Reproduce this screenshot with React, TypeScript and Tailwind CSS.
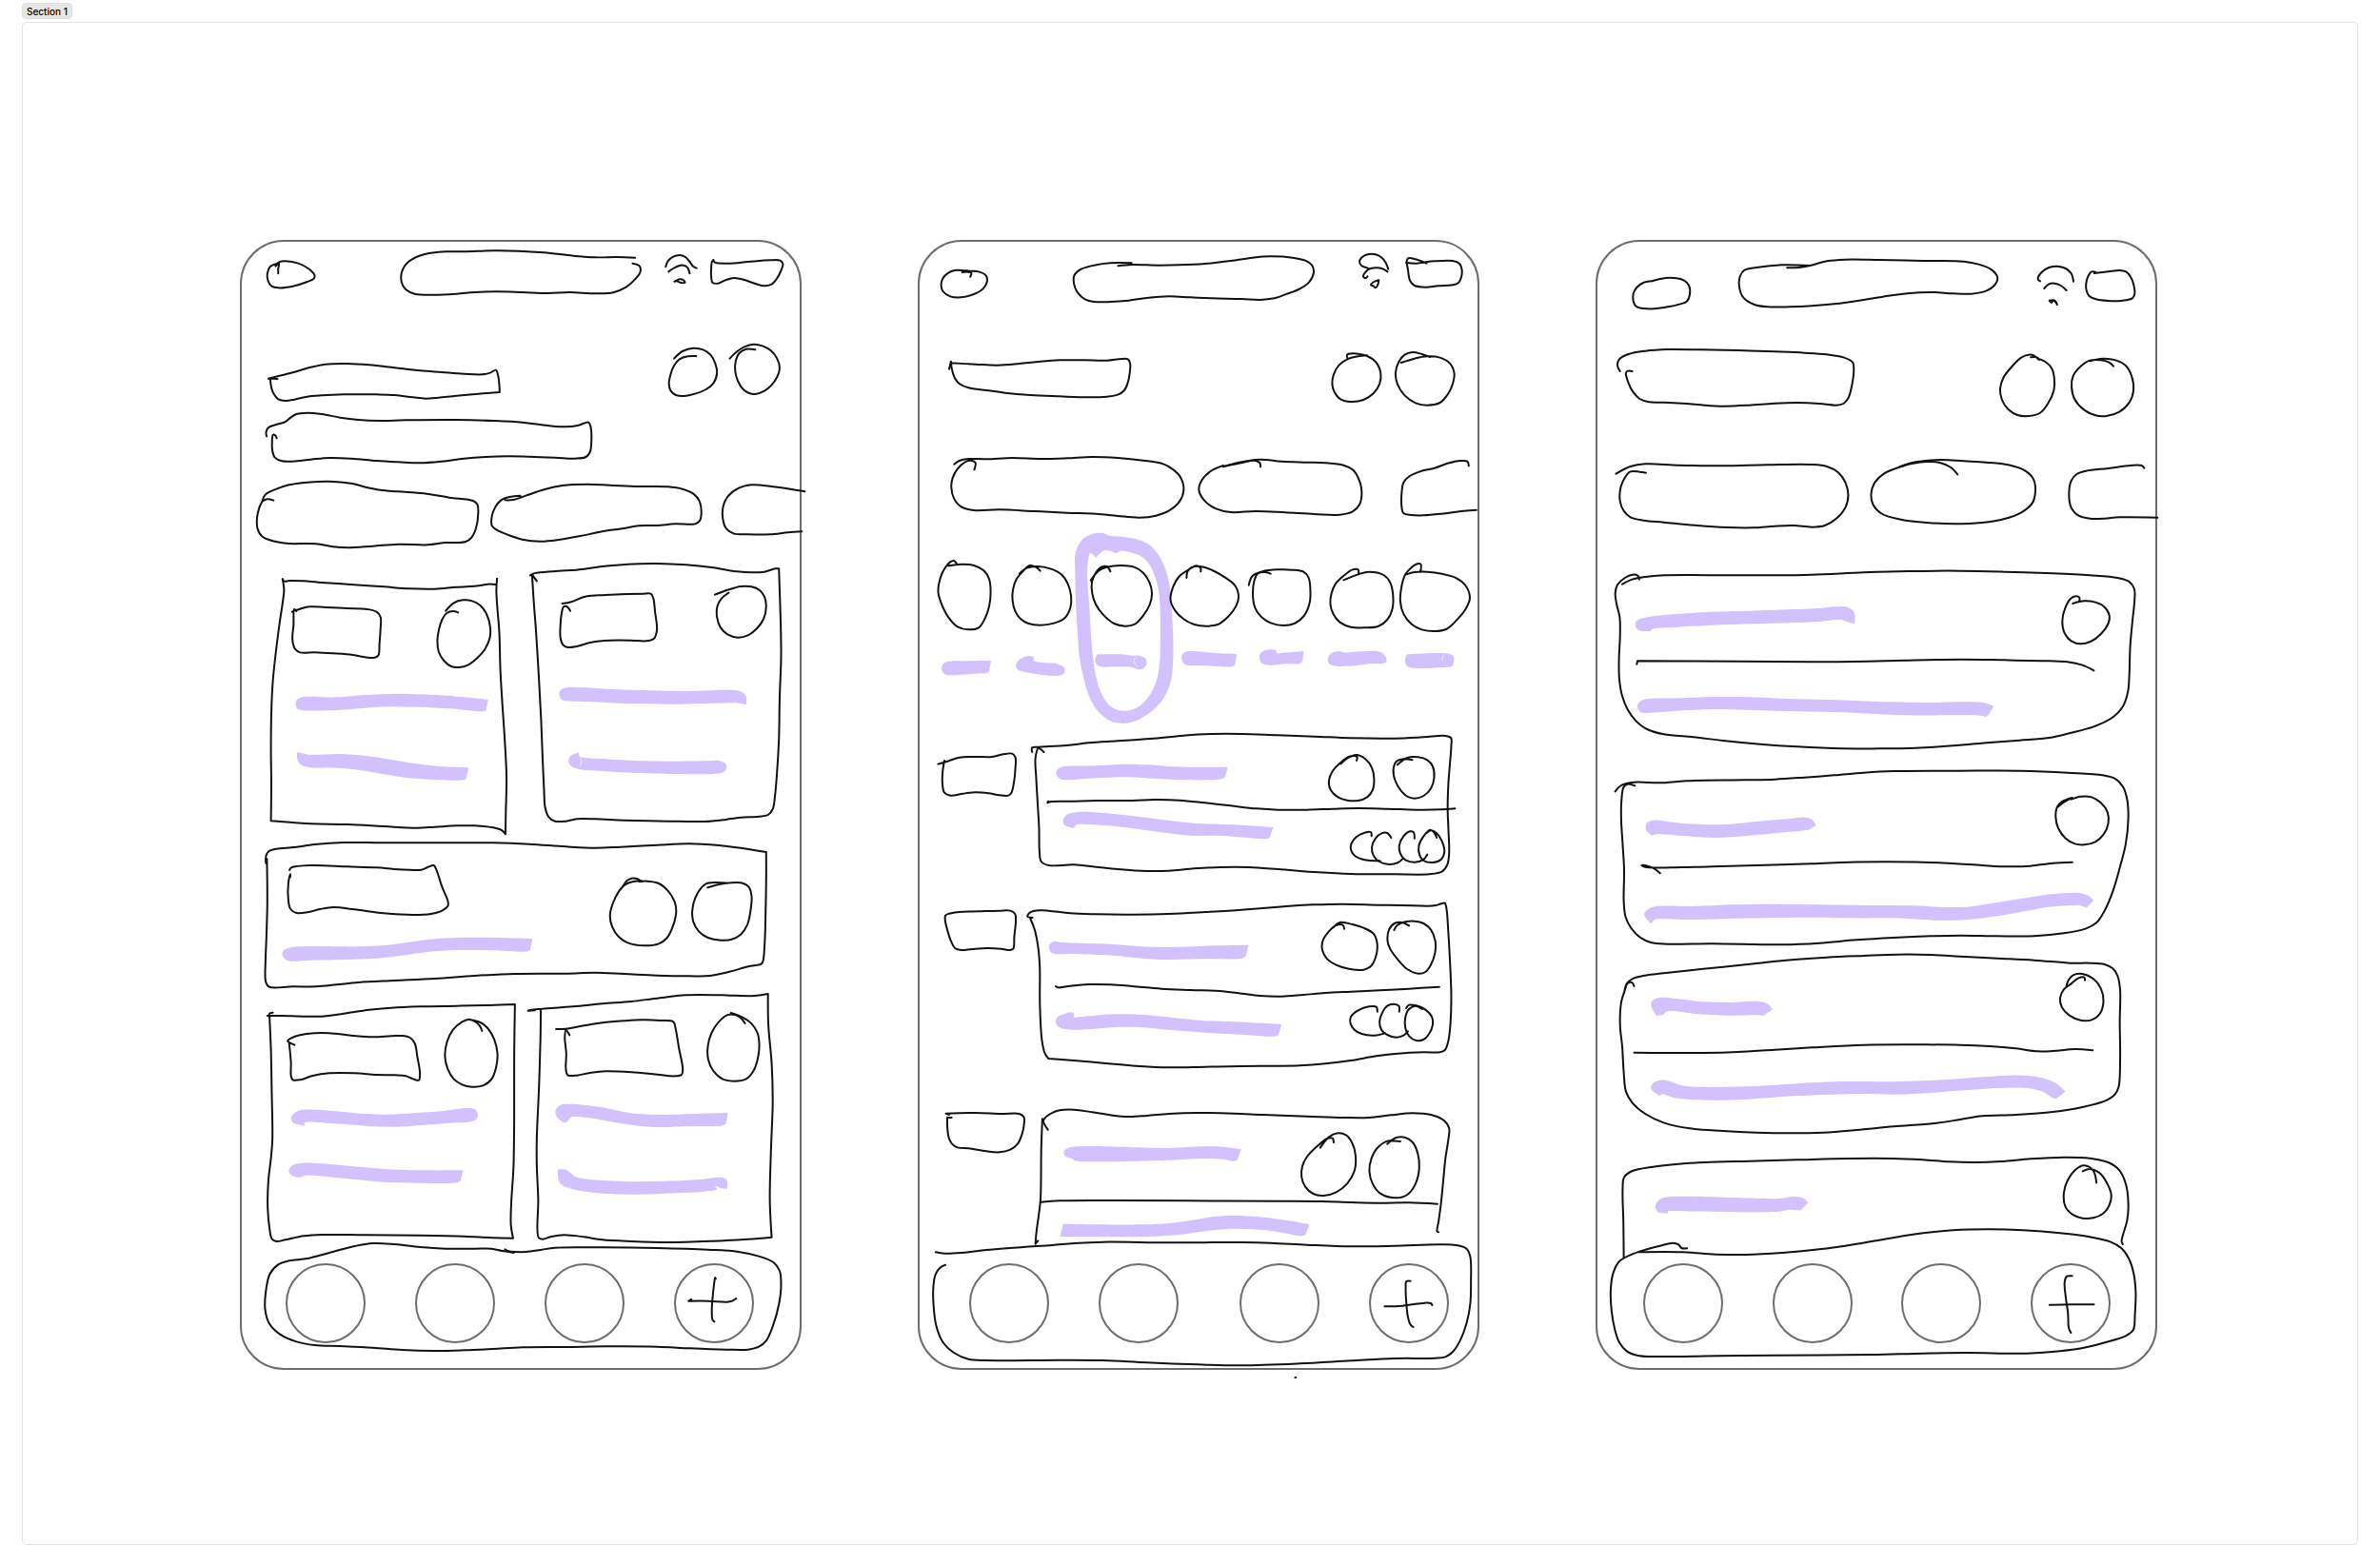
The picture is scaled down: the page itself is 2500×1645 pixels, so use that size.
import React from "react";

type Point = [number, number];

/** Reads "x,y x,y | x,y": a bar makes the point before it a sharp corner. */
function parse(stroke: string): Point[][] {
  const runs = stroke.split("|").map((run) =>
    run
      .trim()
      .split(/\s+/)
      .filter(Boolean)
      .map((pair) => pair.split(",").map(Number) as Point),
  );
  const filled = runs.filter((run) => run.length > 0);
  return filled.map((run, i) => {
    if (i === 0) return run;
    const before = filled[i - 1];
    return [before[before.length - 1], ...run];
  });
}

const dist = (a: Point, b: Point) => Math.sqrt(Math.hypot(a[0] - b[0], a[1] - b[1]));

/** Centripetal Catmull-Rom spline through the points of one run. */
function spline(run: Point[]): string {
  let d = "";
  for (let i = 0; i < run.length - 1; i++) {
    const p0 = run[i - 1] ?? run[i];
    const p1 = run[i];
    const p2 = run[i + 1];
    const p3 = run[i + 2] ?? p2;
    const a = dist(p0, p1);
    const b = dist(p1, p2);
    const c = dist(p2, p3);
    const control = (k: 0 | 1, side: "out" | "in") => {
      if (side === "out") {
        if (a < 0.01) return p1[k];
        return (a * a * p2[k] - b * b * p0[k] + (2 * a * a + 3 * a * b + b * b) * p1[k]) / (3 * a * (a + b));
      }
      if (c < 0.01) return p2[k];
      return (c * c * p1[k] - b * b * p3[k] + (2 * c * c + 3 * c * b + b * b) * p2[k]) / (3 * c * (c + b));
    };
    const n = (v: number) => v.toFixed(1);
    d += `C${n(control(0, "out"))} ${n(control(1, "out"))} ${n(control(0, "in"))} ${n(control(1, "in"))} ${p2[0]} ${p2[1]}`;
  }
  return d;
}

function toPath(stroke: string): string {
  const runs = parse(stroke);
  return `M${runs[0][0].join(" ")}` + runs.map(spline).join("");
}

interface InkProps {
  box: string;
  pen?: string[];
  marker?: string[];
  gaps?: string[];
}

/** Freehand drawing: thin black pen strokes over flat highlighter shapes. */
function Ink({ box, pen = [], marker = [], gaps = [] }: InkProps) {
  return (
    <svg viewBox={box} preserveAspectRatio="none" aria-hidden="true" className="block size-full overflow-visible">
      {marker.map((shape) => (
        <path
          key={shape}
          d={shape
            .split("&")
            .map((part) => toPath(part) + "Z")
            .join("")}
          fillRule="evenodd"
          className="fill-[#d3c1fe]"
        />
      ))}
      {gaps.map((stroke) => (
        <path key={stroke} d={toPath(stroke)} vectorEffect="non-scaling-stroke" className="fill-none stroke-[#f3edff] stroke-1" />
      ))}
      {pen.map((stroke) => (
        <path
          key={stroke}
          d={toPath(stroke)}
          vectorEffect="non-scaling-stroke"
          strokeLinecap="round"
          strokeLinejoin="round"
          className="fill-none stroke-[#111111] stroke-2"
        />
      ))}
    </svg>
  );
}

function Phone({ label, children }: { label: string; children: React.ReactNode }) {
  return (
    <article aria-label={label} className="flex flex-col rounded-[46px] border-2 border-[#6e6e6e]">
      {children}
    </article>
  );
}

function NavButton({ label, children }: { label: string; children?: React.ReactNode }) {
  return (
    <button type="button" aria-label={label} className="size-[84px] shrink-0 rounded-full border-2 border-[#6e6e6e]">
      {children}
    </button>
  );
}

/** The plus drawing fills the button's border box. */
function Plus({ box, pen }: { box: string; pen: string[] }) {
  return (
    <span className="-m-0.5 block size-[84px]">
      <Ink box={box} pen={pen} />
    </span>
  );
}

function Dashboard() {
  return (
    <Phone label="Dashboard">
      <header className="h-[86px]">
        <Ink
          box="10 42 1532 258"
          pen={[
            "110,142 110,128 112,110 103,118",
            "103,112 88,120 80,142 82,165 92,182 110,187 150,182 190,168 208,158 210,148 195,128 165,110 130,103 112,106 103,118",
            "1090,92 1040,90 980,91 920,86 840,76 770,71 700,70 620,73 570,73 510,82 470,103 450,135 449,170 460,192 485,206 540,209 600,206 650,201 710,199 780,201 850,204 910,201 980,205 1030,202 1065,185 1090,160 1104,138 1102,118 1083,110",
            "1174,121 1180,103 1195,89 1212,84 1228,90 1240,105 1250,120 1259,125",
            "1182,136 1195,126 1210,118 1222,116 1233,122 1240,142",
            "1198,167 1205,163 1213,160 1222,162 1227,170 1213,170 1205,166 1198,167",
            "1305,99 1309,107 1350,110 1400,105 1460,100 1488,101 1496,112 1490,135 1478,160 1465,176 1445,181 1420,174 1390,162 1362,156 1340,162 1318,173 1303,171 1299,150 1299,125 1301,105 1305,99",
          ]}
        />
      </header>
      <section aria-label="Greeting" className="h-[156px]">
        <Ink
          box="10 300 1532 468"
          pen={[
            "108,474 96,473 83,473 | 110,465 150,454 190,440 240,428 300,426 360,430 430,439 500,448 560,453 620,458 670,460 692,455 708,446 713,460 717,490 718,516 | 660,521 600,527 550,533 515,536 480,532 430,525 380,523 290,523 230,526 190,530 155,539 130,543 110,538 97,520 91,500 88,474",
            "78,655 77,640 85,626 105,618 130,609 145,595 160,585 190,581 230,585 280,596 330,603 390,606 460,604 600,603 700,606 780,611 850,621 900,625 935,620 962,611 968,625 970,670 966,705 955,720 925,725 870,722 800,719 740,718 680,720 620,725 560,734 500,739 440,736 380,732 310,725 250,723 200,728 150,734 120,733 101,722 94,700 93,675 96,650 102,652 106,661",
            "1258,402 1235,403 1212,412 1197,432 1187,462 1183,490 1188,512 1202,525 1225,528 1255,521 1285,507 1305,488 1315,455 1310,425 1297,398 1277,382 1250,377 1220,387 1197,410",
            "1420,382 1395,380 1376,393 1366,420 1365,450 1372,480 1387,507 1403,519 1420,522 1445,512 1465,493 1480,468 1487,440 1480,410 1463,385 1440,370 1415,365 1390,373 1370,388 1350,410",
          ]}
        />
      </section>
      <section aria-label="Filters" className="h-[94px]">
        <Ink
          box="10 768 1532 282"
          pen={[
            "97,857 80,853 66,860 | 75,838 100,823 140,808 190,800 250,797 310,803 350,815 390,824 440,829 510,835 580,848 645,858 657,870 659,900 653,945 640,975 625,987 600,990 570,990 520,997 440,995 370,1001 300,1006 260,1003 225,995 190,993 140,993 95,985 65,970 53,945 52,910 58,880 66,860",
            "733,856 755,855 790,842 840,823 890,810 960,806 1020,809 1100,813 1180,814 1220,821 1250,836 1267,860 1272,895 1268,920 1255,931 1200,931 1150,936 1100,937 1060,945 1000,955 940,969 880,981 830,986 780,980 740,965 710,950 697,937 697,905 706,878 722,856 745,846 775,842",
            "1556,829 1520,822 1470,814 1410,808 1375,818 1345,844 1332,875 1331,915 1340,945 1360,961 1400,964 1460,964 1510,958 1548,955",
          ]}
        />
      </section>
      <section aria-label="Top cards" className="h-[290px]">
        <Ink
          box="10 0 1532 870"
          marker={[
            "687,435 | 620,427 540,420 430,416 350,420 270,427 175,427 160,437 158,450 163,464 175,468 270,468 330,463 410,457 500,458 580,463 670,472 680,470",
            "633,649 | 560,646 490,637 420,624 350,612 280,606 195,608 162,600 | 162,620 172,640 200,649 250,649 320,655 400,670 470,682 540,687 618,688 626,684",
            "1395,451 | 1396,430 1388,415 1370,406 1340,404 1220,408 1130,406 1030,402 935,396 905,396 885,405 882,420 888,434 905,439 1000,443 1100,448 1210,449 1300,446 1370,445",
            "935,602 | 940,614 1000,621 1070,626 1200,629 1290,628 1320,627 1338,636 1341,650 1332,664 1300,669 1200,669 1080,665 1000,660 940,655 915,645 907,628 915,610 935,602",
          ]}
          gaps={["937,612 943,628 939,644", "1362,440 1368,450"]}
          pen={[
            "122,55 127,62 140,60 180,61 220,65 300,71 400,79 470,85 540,86 600,80 660,76 685,71 708,72",
            "711,53 709,90 712,150 717,220 720,340 725,440 732,560 737,680 735,790 734,859 | 725,847 700,838 650,832 600,832 540,836 490,839 400,834 300,828 200,826 150,822 90,817 | 91,700 90,600 91,480 95,380 102,300 113,200 122,130 126,90 122,55",
            "148,158 153,155 170,149 196,142 240,144 300,147 355,150 380,158 391,175 391,210 388,260 385,295 375,302 355,302 315,294 260,289 210,286 170,286 156,275 150,255 149,235 152,200 154,150 160,156",
            "604,160 590,156 573,162 560,183 551,215 547,250 551,285 565,312 585,330 607,333 632,325 657,303 678,275 691,240 692,205 682,165 665,138 643,124 617,121 592,130 570,155",
            "820,61 807,40 | 812,130 818,220 826,370 832,500 836,620 840,720 843,775 853,805 870,818 900,818 930,811 980,811 1060,815 1180,818 1280,819 1330,814 1380,806 1430,803 1455,798 1468,780 1474,740 1480,660 1485,560 1487,430 1491,300 1490,200 1485,22 | 1475,22 1445,32 1410,34 1370,31 1300,18 1230,10 1150,6 1070,8 1000,15 930,26 880,29 830,34 812,37 802,43",
            "912,155 902,141 894,142 888,165 885,200 885,240 892,262 905,270 930,267 970,254 1020,248 1080,248 1120,250 1142,242 1150,215 1145,160 1140,115 1133,101 1110,101 1050,103 990,106 950,111 915,127 890,132",
            "1347,98 1328,115 1316,140 1315,175 1325,208 1345,230 1372,239 1400,232 1425,210 1443,180 1450,140 1445,110 1432,90 1410,79 1380,78 1345,89 1309,104",
          ]}
        />
      </section>
      <section aria-label="Wide card" className="h-[160px]">
        <Ink
          box="10 870 1532 480"
          marker={[
            "808,1188 | 710,1185 600,1185 540,1189 470,1199 400,1209 330,1213 140,1217 123,1228 122,1243 135,1257 200,1256 300,1254 370,1251 440,1243 520,1230 600,1224 700,1225 795,1228 802,1223",
          ]}
          pen={[
            "76,950 77,925 85,912 105,905 155,900 210,891 290,885 400,886 700,886 800,890 900,898 980,902 1050,899 1150,893 1240,889 1320,894 1380,902 1450,915 | 1450,1000 1448,1130 1446,1200 1441,1260 1436,1268 1400,1276 1350,1292 1295,1305 1240,1306 1150,1304 1060,1299 980,1295 900,1298 760,1299 650,1305 540,1314 430,1320 330,1326 270,1333 215,1339 150,1339 85,1340 76,1325 75,1260 77,1200 80,1080 79,937",
            "141,972 146,964 200,957 300,961 380,964 440,970 503,971 520,963 537,957 544,970 560,1025 576,1070 576,1085 560,1100 530,1110 480,1113 400,1108 320,1096 262,1089 225,1095 190,1105 160,1107 144,1095 138,1070 138,1010 143,985 143,994",
            "1057,1022 1068,1005 1080,998 1095,999 1107,1008",
            "1107,1006 1085,1008 1062,1018 1045,1040 1028,1080 1021,1115 1027,1150 1045,1182 1070,1201 1115,1210 1155,1204 1178,1185 1195,1145 1203,1100 1198,1070 1180,1037 1155,1014 1125,1007 1100,1008",
            "1289,1027 1310,1020 1340,1013 1380,1012 1402,1025 1410,1055 1407,1100 1398,1145 1380,1175 1355,1190 1325,1193 1290,1185 1265,1165 1250,1135 1247,1100 1255,1060 1270,1030 1285,1015 1310,1011 1345,1013",
          ]}
        />
      </section>
      <section aria-label="Lower cards" className="h-[265px]">
        <Ink
          box="10 90 1532 795"
          marker={[
            "184,518 | 182,508 270,511 350,518 430,521 510,515 580,509 640,504 656,494 658,480 650,466 630,462 560,471 480,478 420,482 350,480 260,471 180,467 158,474 146,490 150,507 165,514",
            "618,658 | 500,658 400,654 310,645 230,637 175,635 150,642 139,658 145,672 168,680 185,674 250,679 330,688 410,696 500,698 600,697 611,691",
            "1345,477 | 1250,480 1150,483 1070,476 1000,460 950,452 910,449 885,452 872,468 874,488 895,508 | 905,503 915,490 960,492 1020,504 1080,515 1150,522 1240,519 1330,517 1340,511",
            "878,655 | 900,656 915,668 925,678 950,685 1060,693 1170,692 1270,687 1310,681 1330,681 1342,690 1342,717 | 1328,715 1308,705 | 1315,718 1290,724 1200,730 1080,734 980,729 920,718 885,700 878,675",
          ]}
          pen={[
            "95,161 86,164 86,176",
            "80,171 120,171 180,173 230,173 290,164 360,152 420,146 500,142 600,140 690,138 760,135 | 758,300 758,500 756,650 750,760 749,830 755,872 | 700,871 620,866 500,863 350,862 230,861 180,865 130,877 105,882 93,875 86,840 81,770 83,690 90,620 94,560 92,400 90,280 86,172",
            "155,263 140,255 136,250 145,242 170,232 210,226 250,226 310,233 370,238 420,235 450,234 472,240 485,258 492,300 499,350 496,374 480,370 460,361 430,358 380,357 320,352 250,352 205,360 170,373 150,373 145,360 145,320 140,258",
            "670,219 663,202 650,189 635,182 615,190 590,215 573,255 568,300 576,340 592,370 615,388 642,395 672,391 695,372 708,335 712,290 703,245 685,210 665,192 635,183",
            "796,155 815,154 | 797,153 835,149 920,142 1000,133 1080,126 1150,116 1230,106 1330,106 1420,108 1455,102 | 1456,200 1465,320 1468,440 1463,600 1460,750 1465,869 | 1400,875 1300,881 1180,885 1080,882 1000,877 950,868 895,862 860,867 835,875 825,870 824,750 820,640 820,560 826,400 830,250 831,152",
            "873,213 900,212 940,204 1000,193 1060,187 1110,184 1160,186 1195,190 1201,210 1210,270 1221,340 1218,356 1200,361 1150,356 1080,349 1010,346 970,350 930,359 905,358 900,340 901,290 897,240 900,217 910,232",
            "1353,162 1385,176 1410,196 1426,225 1431,260 1428,300 1415,345 1395,370 1362,377 1330,370 1305,345 1291,310 1290,265 1300,225 1320,190 1345,168 1365,168 1380,178 1392,195",
          ]}
        />
      </section>
      <nav aria-label="Dashboard tabs" className="relative flex h-[132px] items-start justify-between pt-[22px] pr-12 pl-[46px]">
        <div className="pointer-events-none absolute inset-0">
          <Ink
            box="10 885 1532 396"
            pen={[
              "733,907 742,913 757,917",
              "735,913 760,915 790,915 830,909 870,902 1000,901 1150,903 1290,908 1370,914 1430,929 1470,948 1487,975 1491,1020 1485,1080 1468,1150 1450,1195 1430,1214 1400,1223 1340,1223 1240,1219 1150,1214 1010,1213 900,1215 780,1216 700,1221 620,1225 540,1227 450,1224 370,1217 280,1212 210,1209 160,1198 115,1175 85,1140 74,1095 76,1040 87,985 110,955 140,943 190,936 250,918 320,897 370,888 430,891 500,900 570,905 650,905 695,905 725,912 757,917",
            ]}
          />
        </div>
        <NavButton label="Tab 1" />
        <NavButton label="Tab 2" />
        <NavButton label="Tab 3" />
        <NavButton label="Add">
          <Plus
            box="1195 952 220 252"
            pen={["1310,1001 1308,997 1306,1010 1302,1050 1299,1100 1301,1130 1306,1136", "1243,1066 1235,1071 | 1290,1071 1340,1074 1355,1071 1366,1063"]}
          />
        </NavButton>
      </nav>
    </Phone>
  );
}

function Agenda() {
  return (
    <Phone label="Agenda">
      <header className="h-[86px]">
        <Ink
          box="16 42 1532 258"
          pen={[
            "155,152 158,140 148,137 133,138",
            "133,132 155,134 180,137 198,148 201,168 190,190 165,207 130,217 100,214 80,198 75,178 80,157 95,140 112,132 133,132",
            "598,109 540,109 495,116 460,128 441,147 440,175 450,202 470,223 495,231 540,231 590,227 640,219 700,214 760,217 820,220 900,222 950,225 990,220 1025,206 1060,190 1085,170 1098,140 1094,117 1075,101 1040,92 980,88 930,92 870,102 800,111 730,115 670,116 600,114 561,118",
            "1303,128 1296,108 1283,90 1268,82 1250,81 1235,87 1224,103 1230,118 1245,124 1250,128",
            "1301,136 1285,126 1268,124 1250,128 1240,138 1234,150 1240,157 1246,151",
            "1277,163 1264,168 1255,178 1262,181 1268,187 1274,178 1277,163",
            "1352,108 1380,110 1400,107 1430,103 1480,102 1498,110 1505,130 1503,155 1495,172 1480,178 1440,181 1405,185 1375,180 1363,165 1357,130 1354,100 1360,93 1378,97 1408,110",
          ]}
        />
      </header>
      <section aria-label="Heading" className="h-[120px]">
        <Ink
          box="16 300 1532 360"
          pen={[
            "97,443 102,419 | 104,440 112,470 125,489 150,502 200,510 250,518 320,525 400,529 480,532 530,530 560,524 578,510 588,485 593,455 594,425 588,412 570,411 530,416 470,415 400,415 340,420 290,426 230,431 170,428 102,424",
            "1191,410 1190,398 1205,394 1225,396 1245,402 1268,420 1282,455 1279,490 1262,520 1235,540 1200,546 1172,538 1155,515 1149,490 1153,460 1168,430 1195,410 1220,403 1245,400",
            "1338,423 1375,410 1410,403 1445,407 1472,425 1484,455 1480,490 1465,525 1445,549 1410,557 1378,550 1348,526 1328,490 1323,455 1332,420 1348,398 1370,390 1395,396 1418,405",
          ]}
        />
      </section>
      <section aria-label="Filters" className="h-[100px]">
        <Ink
          box="16 660 1532 300"
          pen={[
            "166,760 169,738 155,731 140,737 120,758 107,785 103,815 110,850 130,877 165,888 235,886 330,891 420,896 500,899 560,906 620,911 665,905 700,890 730,860 741,825 733,785 710,758 685,742 630,731 560,723 490,720 420,724 350,726 270,723 200,727 150,726 125,732 111,743",
            "952,751 950,738 935,731 905,737 850,750",
            "850,751 890,738 950,728 1010,734 1080,737 1130,739 1180,746 1205,760 1222,790 1230,830 1224,870 1205,892 1170,902 1100,900 1020,895 940,891 870,894 830,883 800,860 783,825 790,795 815,765 850,747",
            "1524,748 1520,734 1500,732 1470,739 1430,755 1390,766 1362,780 1345,800 1340,830 1340,880 1345,898 1365,903 1400,904 1450,899 1510,890 1545,887",
          ]}
        />
      </section>
      <section aria-label="Days" className="h-[205px]">
        <Ink
          box="16 30 1532 615"
          marker={[
            "537,39 | 520,30 500,30 475,40 455,62 443,100 443,150 445,250 450,350 455,420 465,480 480,540 505,590 540,622 575,630 610,622 645,598 680,560 705,500 712,430 712,350 708,270 703,200 690,140 670,95 645,65 615,50 575,42 537,39 & 500,108 | 485,93 478,120 477,180 482,260 486,340 492,420 500,480 515,535 540,575 575,590 610,582 645,545 665,500 675,440 677,370 677,290 672,210 660,160 645,125 620,100 600,92 568,86 555,93 540,86 525,84 513,92 500,108",
            "212,432 | 150,433 90,436 78,447 77,462 88,476 130,476 170,473 200,471 207,466",
            "330,420 | 330,433 390,440 | 395,443 412,452 415,466 405,478 355,477 310,469 285,460 281,445 292,427 315,417 330,420",
            "505,412 570,412 602,417 | 618,416 635,424 640,438 632,455 615,459 600,453 560,451 510,450 499,438 499,424 505,412",
            "887,411 | 830,408 750,403 738,412 736,430 745,444 800,447 876,450 882,444",
            "1071,402 | 1040,405 995,409 | 995,399 970,398 952,408 950,428 958,442 980,446 1025,442 1060,441 1067,434",
            "1299,436 | 1296,420 1282,405 1260,401 1230,403 1185,407 | 1165,403 1145,410 1137,428 1142,443 1160,449 1210,448 1260,441 1285,442",
            "1355,412 1470,410 1481,418 1483,435 1478,449 1450,453 1360,453 1350,440 1350,424 1355,412",
          ]}
          gaps={["614,418 606,428 607,442 614,452", "1454,414 1451,430"]}
          pen={[
            "117,125 110,117 100,121 83,145 72,175 67,215 75,250 95,295 120,325 150,334 178,328 195,300 207,260 211,215 207,175 192,148 165,132 130,128 95,133",
            "347,149 335,137 318,132 300,150 282,175 272,210 271,240 278,275 293,300 315,315 347,320 385,314 415,297 430,265 432,230 423,190 405,160 375,142 340,135 310,140 290,158",
            "540,151 530,135 515,137 500,155 489,185 490,220 500,255 520,287 550,315 580,323 607,317 630,290 648,255 654,220 647,185 630,155 605,137 570,132 530,137 508,148 486,179",
            "788,151 787,139 775,133 755,145 730,165 712,200 705,240 718,275 740,300 770,318 803,323 835,318 862,295 885,260 892,230 882,195 855,170 825,150 797,137 770,135 753,148 749,171",
            "980,158 965,153 945,157 935,180 931,220 937,265 955,295 980,313 1015,321 1045,315 1072,290 1087,250 1089,210 1084,170 1070,152 1040,146 1000,145 960,150 930,165 920,194",
            "1221,160 1220,145 1205,145 1180,165 1158,190 1147,220 1144,255 1152,285 1170,311 1200,326 1240,328 1275,324 1300,303 1314,270 1316,225 1308,185 1290,162 1250,152 1220,160 1180,178",
            "1391,153 1392,128 1383,127 1365,140 1350,160 1340,195 1336,245 1345,285 1368,318 1395,334 1430,339 1462,333 1490,305 1515,270 1527,235 1515,195 1490,172 1450,158 1410,152 1375,153 1353,160",
          ]}
        />
      </section>
      <section aria-label="First event" className="h-[170px]">
        <Ink
          box="16 645 1532 510"
          marker={[
            "862,767 | 770,768 700,765 640,760 580,758 500,763 405,767 393,777 393,795 405,806 500,802 580,799 680,805 740,808 845,805 855,799",
            "987,957 | 900,950 770,944 700,936 600,921 510,911 450,909 420,918 410,935 414,950 440,959 | 445,950 520,951 600,960 680,973 760,983 850,984 968,993 977,989",
          ]}
          pen={[
            "67,758 90,750 125,737 170,735 215,735 245,727 270,725 279,737 279,770 275,815 268,848 260,857 235,856 205,850 170,847 135,851 100,857 84,848 79,825 79,785 84,747",
            "325,720 325,706 345,704 420,699 480,691 560,685 650,678 740,668 820,663 900,663 1000,667 1100,671 1200,676 1320,677 1400,673 1460,669 1475,675 1476,700 1472,760 1468,820 1466,900 1468,960 1470,1040 1465,1075 1450,1097 1415,1105 1320,1105 1200,1104 1110,1099 1000,1089 920,1083 840,1083 770,1087 700,1094 640,1095 560,1089 500,1082 440,1075 370,1077 350,1065 345,1030 344,960 340,880 336,800 334,740 342,708 357,720",
            "369,875 367,880 | 377,876 430,875 500,873 600,873 660,870 730,872 800,880 870,889 940,898 1000,902 1080,902 1150,899 1220,897 1300,899 1380,902 1450,901 1486,898",
            "1216,747 1217,735 1200,733 1170,755 1150,780 1140,810 1145,840 1165,862 1190,872 1220,873 1245,862 1260,840 1264,805 1258,770 1240,742 1215,729 1190,740 1173,757",
            "1369,745 1345,742 1325,750 1317,775 1322,810 1338,842 1355,860 1375,866 1400,858 1420,835 1429,800 1425,765 1410,745 1385,736 1355,738 1328,760",
            "1257,985 1255,972 1238,974 1215,988 1201,1010 1201,1030 1212,1048 1235,1059 1280,1063",
            "1311,990 1300,975 1285,976 1268,992 1258,1020 1262,1045 1278,1065 1305,1074 1330,1068 1344,1055",
            "1375,992 1372,972 1362,970 1345,985 1333,1015 1336,1040 1350,1060 1375,1067 1398,1060 1410,1043",
            "1436,990 1428,972 1418,965 1400,985 1387,1015 1389,1045 1400,1062 1425,1068 1448,1058 1457,1035 1450,1000 1435,975 1420,967 1408,975",
          ]}
        />
      </section>
      <section aria-label="Second event" className="h-[200px]">
        <Ink
          box="16 -15 1532 600"
          marker={[
            "919,158 | 830,160 690,165 620,162 540,155 400,149 385,146 372,158 372,172 380,184 440,186 530,190 600,197 680,204 780,202 900,200 912,194",
            "1010,408 | 880,400 780,395 690,384 620,377 550,376 490,381 439,387 | 438,372 415,374 395,385 390,402 400,418 430,425 490,423 550,417 620,417 700,425 800,434 900,440 990,446 1001,442",
          ]}
          pen={[
            "97,59 125,54 180,52 235,50 265,50 278,60 280,85 276,130 273,170 265,174 240,170 200,168 160,171 130,174 113,168 102,145 92,110 86,80 87,65 97,59",
            "326,72 312,68 320,55 345,49 370,50 430,58 500,61 600,62 700,60 800,54 900,47 1000,38 1100,31 1180,29 1280,32 1370,34 1430,34 1448,28 1458,26 1463,45 1468,120 1472,200 1476,320 1474,400 1468,460 1458,490 1445,496 1400,496 1330,500 1270,508 1200,522 1130,532 1060,538 980,539 900,540 800,542 700,544 620,540 550,533 480,526 370,516 | 360,500 352,460 348,400 346,330 346,230 342,170 332,110 320,75",
            "390,288 396,292 430,287 480,282 540,283 600,288 680,296 760,300 840,303 900,311 950,318 1010,320 1070,315 1130,309 1200,305 1280,301 1360,296 1443,290",
            "1182,107 1178,95 1160,96 1140,115 1123,145 1122,175 1135,202 1160,221 1195,233 1235,236 1255,225 1270,190 1272,150 1262,122 1235,104 1205,93 1170,87 1152,103",
            "1319,111 1328,95 1350,85 1375,83 1400,90 1420,110 1432,145 1431,185 1420,220 1405,243 1385,248 1355,234 1330,205 1308,170 1301,145 1305,110 1320,90 1340,87 1360,97",
            "1273,368 1270,353 1250,352 1220,364 1200,385 1199,405 1210,425 1230,438 1265,443 1293,436",
            "1333,368 1332,350 1318,344 1300,350 1287,370 1279,400 1284,425 1300,441 1325,449 1345,443 1357,430",
            "1352,357 1360,347 1380,349 1405,362 1423,385 1425,410 1415,438 1400,456 1380,459 1360,445 1350,420 1350,385 1360,360 1378,350 1396,360",
          ]}
        />
      </section>
      <section aria-label="Third event" className="h-[165px]">
        <Ink
          box="16 585 1532 495"
          marker={[
            "899,802 | 850,794 790,793 700,798 425,797 413,808 415,823 438,832 | 438,836 700,836 790,831 850,833 880,839 889,834",
            "1087,1038 | 1020,1025 950,1015 880,1011 820,1015 760,1026 700,1035 640,1039 410,1037 | 402,1077 | 640,1077 720,1072 790,1061 860,1053 930,1054 1000,1062 1066,1075 1076,1071",
          ]}
          pen={[
            "104,702 92,702 | 92,730 96,765 105,785 120,796 150,799 200,808 235,811 265,803 285,785 297,755 303,720 302,700 290,690 240,690 170,687 88,689 | 97,693",
            "368,740 356,715 357,708 375,690 400,679 440,677 490,685 540,694 590,699 640,696 700,690 780,687 880,689 960,693 1080,698 1180,702 1250,702 1310,694 1370,688 1420,693 1455,710 1470,735 1468,770 1460,830 1454,900 1448,970 1441,1030 1437,1060 1441,1063",
            "353,706 350,800 348,960 343,1010 337,1060 334,1100 | 341,1090",
            "350,968 400,964 550,963 750,964 1000,965 1120,966 1200,969 1280,971 1360,970 1438,974",
            "1153,781 1150,767 1135,768 1110,790 1080,825 1067,855 1065,890 1075,920 1097,942 1125,948 1160,937 1190,910 1210,870 1213,820 1203,780 1187,757 1165,751 1140,763 1116,797",
            "1336,777 1310,775 1300,776 1275,795 1257,830 1251,870 1260,910 1280,940 1325,955 1355,945 1378,910 1388,860 1384,815 1370,780 1350,765 1325,765 1300,785",
          ]}
        />
      </section>
      <nav aria-label="Agenda tabs" className="relative flex h-[137px] items-start justify-between pt-[27px] pr-[30px] pl-[52px]">
        <div className="pointer-events-none absolute inset-0">
          <Ink
            box="16 1080 1532 411"
            pen={[
              "60,1126 85,1130 130,1128 200,1119 300,1110 380,1104 440,1098 520,1094 700,1096 900,1095 980,1097 1080,1103 1200,1108 1320,1106 1440,1102 1490,1104 1518,1115 1528,1140 1530,1220 1528,1290 1518,1350 1500,1405 1480,1440 1460,1456 1430,1460 1320,1461 1200,1468 1060,1477 900,1483 780,1480 640,1474 520,1467 400,1466 200,1467 150,1463 110,1443 80,1410 62,1360 54,1290 54,1230 60,1195 72,1175 87,1166",
              "1047,1521 1049,1521",
            ]}
          />
        </div>
        <div className="flex gap-[52px]">
          <NavButton label="Tab 1" />
          <NavButton label="Tab 2" />
        </div>
        <div className="flex gap-[52px]">
          <NavButton label="Tab 3" />
          <NavButton label="Add">
            <Plus
              box="1247 1162 220 252"
              pen={["1361,1218 1350,1219 1348,1240 1350,1290 1354,1330 1361,1355 1369,1363", "1290,1298 1340,1296 1400,1287 1417,1288 1421,1294"]}
            />
          </NavButton>
        </div>
      </nav>
    </Phone>
  );
}

function Feed() {
  return (
    <Phone label="Feed">
      <header className="h-[86px]">
        <Ink
          box="21 42 1506 258"
          pen={[
            "168,166 145,171 127,186 118,205 118,230 126,246 145,252 175,253 215,246 245,238 262,230 270,210 268,180 255,164 235,157 205,156 168,166",
            "533,124 565,123 595,117 640,103 690,98 780,99 900,102 1010,104 1050,113 1085,130 1101,155 1092,180 1070,197 1030,206 980,205 930,201 890,202 820,210 740,225 660,238 600,244 540,247 480,247 445,240 415,218 404,185 406,150 418,131 450,123 520,115 595,117",
            "1216,166 1210,160 1220,138 1240,123 1262,119 1285,126 1300,142 1306,167",
            "1227,189 1240,175 1255,173 1272,180 1287,195",
            "1241,227 1247,234 1251,227 1258,232 1262,240",
            "1242,227 1254,226 1260,234",
            "1366,137 1355,136 1345,152 1340,175 1341,195 1348,212 1365,222 1400,228 1440,227 1465,220 1471,208 1468,175 1460,152 1448,136 1430,132 1400,136 1362,141",
          ]}
        />
      </header>
      <section aria-label="Heading" className="h-[120px]">
        <Ink
          box="21 300 1506 360"
          pen={[
            "82,450 75,432 80,412 105,396 150,386 210,381 300,382 400,384 500,388 580,392 640,397 685,406 710,422 713,445 706,505 698,535 685,552 665,557 620,552 560,549 500,551 430,557 360,560 300,556 250,551 200,548 160,547 135,537 117,515 104,485 98,455 103,449 115,450",
            "1191,406 1208,406 1213,414 1200,401 1185,398 1165,407 1140,435 1117,470 1108,505 1113,540 1130,570 1155,588 1185,591 1215,582 1238,550 1253,510 1254,470 1247,440 1230,420 1210,410",
            "1414,434 1402,422 1380,415 1350,416 1325,435 1305,465 1301,500 1310,540 1335,572 1365,589 1395,591 1430,578 1457,548 1468,510 1463,465 1447,432 1420,415 1385,410 1350,418",
          ]}
        />
      </section>
      <section aria-label="Filters" className="h-[110px]">
        <Ink
          box="21 660 1506 330"
          pen={[
            "152,770 135,767 110,766 95,785 83,820 82,860 92,890 110,910 145,920 200,926 290,936 370,942 440,943 500,938 550,936 600,941 635,936 665,915 690,880 698,840 690,800 670,768 640,750 600,744 480,745 360,748 240,746 150,742 110,750 71,773",
            "993,775 975,753 945,738 910,735 870,741 837,751",
            "837,751 880,736 950,729 1010,733 1070,737 1130,745 1175,763 1198,790 1203,830 1195,865 1165,895 1120,915 1060,927 985,931 910,927 840,917 790,900 765,870 760,835 770,800 795,772 850,747",
            "1497,755 1490,747 1460,747 1400,756 1340,764 1315,774 1300,795 1294,835 1300,880 1320,905 1350,914 1390,914 1430,910 1533,911",
          ]}
        />
      </section>
      <section aria-label="First post" className="h-[230px]">
        <Ink
          box="21 30 1506 690"
          marker={[
            "715,285 | 716,262 710,243 690,232 660,232 620,237 500,242 400,246 300,250 150,266 128,275 123,290 132,306 165,309 | 168,303 240,296 330,290 450,286 620,279 680,273 695,280",
            "1090,546 | 1065,535 900,534 760,530 640,525 530,522 430,517 340,516 250,520 148,524 132,535 129,550 138,565 155,567 250,559 340,555 430,557 540,561 660,564 760,569 850,574 1060,576 1069,579 1078,571",
          ]}
          pen={[
            "134,146 130,134 115,131 95,141 75,163 69,190 73,225 81,265 82,320 79,400 80,460 87,510 102,555 125,592 155,618 200,634 280,643 360,654 460,665 560,673 680,679 780,679 880,677 980,670 1080,660 1160,653 1240,645 1300,629 1360,610 1410,582 1440,545 1453,500 1457,440 1459,360 1465,280 1471,210 1470,175 1455,152 1425,141 1350,133 1250,127 1120,122 1000,119 860,120 740,124 600,131 500,133 380,133 200,133 150,138 115,146 88,161",
            "1322,213 1322,203 1312,199 1298,207 1284,235 1276,275 1282,315 1300,340 1325,349 1352,342 1380,318 1400,285 1403,260 1390,233 1365,218 1335,214 1304,222",
            "127,413 129,403 | 400,404 600,406 750,404 850,401 1000,398 1120,400 1240,403 1290,406 1330,416 1361,433",
          ]}
        />
      </section>
      <section aria-label="Second post" className="h-[200px]">
        <Ink
          box="21 720 1506 600"
          marker={[
            "611,921 | 600,902 580,896 540,900 430,911 370,918 300,918 230,912 170,905 154,915 152,935 168,953 | 180,949 260,955 330,960 400,956 500,946 590,936",
            "1361,1157 | 1345,1142 1320,1134 1280,1135 1230,1140 1160,1153 1080,1168 1020,1178 960,1179 870,1174 740,1173 620,1171 500,1169 380,1171 280,1176 180,1176 157,1186 147,1202 166,1231 | 175,1218 188,1216 260,1218 400,1214 600,1211 700,1213 850,1214 930,1220 1010,1219 1090,1208 1180,1190 1240,1178 1320,1172 | 1342,1180",
          ]}
          pen={[
            "122,796 103,791 92,800 86,840 85,900 89,980 93,1060 92,1160 97,1210 112,1245 135,1273 165,1290 210,1295 330,1294 520,1297 620,1292 720,1282 820,1275 920,1270 1000,1268 1100,1270 1200,1270 1280,1261 1340,1246 1368,1228 1390,1190 1412,1130 1432,1050 1447,980 1454,900 1451,840 1440,800 1420,775 1385,763 1290,755 1160,749 1000,749 820,750 740,755 660,763 580,770 500,776 420,778 260,781 190,787 120,785 85,795 69,814",
            "1262,865 1280,848 1303,834 | 1275,846 1262,863 1258,895 1265,930 1285,962 1310,979 1335,982 1365,973 1387,950 1400,915 1398,880 1380,850 1355,832 1325,830 1300,839",
            "190,1072 175,1058 150,1047 140,1047 155,1053 250,1053 330,1051 450,1047 600,1042 700,1037 800,1036 900,1037 980,1041 1060,1047 1130,1051 1190,1049 1250,1040 1303,1037",
          ]}
        />
      </section>
      <section aria-label="Third post" className="h-[200px]">
        <Ink
          box="21 30 1506 600"
          marker={[
            "494,211 | 480,193 455,186 380,189 310,187 230,177 190,174 170,182 166,200 180,230 | 195,229 212,217 280,224 380,230 455,229 468,231",
            "1284,470 | 1260,445 1230,430 1190,421 1130,419 1060,424 980,431 900,436 820,439 750,438 680,438 600,442 500,449 420,454 330,456 270,454 240,448 215,437 190,434 170,445 166,462 190,484 | 195,478 230,490 270,495 340,497 430,494 550,484 650,479 740,477 830,479 920,474 1020,465 1120,458 1180,459 1220,469 1256,492 1264,488",
          ]}
          pen={[
            "120,138 115,127 103,128 95,150 85,190 82,260 88,330 92,410 98,470 115,505 150,540 200,568 270,586 360,594 450,599 540,601 630,599 720,591 820,580 930,570 1000,558 1060,547 1150,543 1250,534 1330,519 1390,500 1417,480 1428,455 1432,370 1431,250 1432,150 1425,105 1412,82 1390,69 1350,65 1300,65 1200,56 1100,50 1000,44 920,39 830,38 740,42 640,47 530,56 420,70 300,84 200,97 150,104 115,115 100,130 93,160",
            "1337,119 1335,110 1320,112 1300,130 1280,148 1270,175 1275,205 1295,230 1325,245 1355,244 1377,225 1387,185 1380,145 1360,115 1330,99 1305,103 1293,118 1287,138",
            "120,347 200,348 310,348 400,345 500,338 600,331 740,323 900,322 1000,323 1080,327 1150,334 1210,343 1260,341 1310,336 1358,340",
          ]}
        />
      </section>
      <section aria-label="Fourth post" className="h-[110px]">
        <Ink
          box="21 630 1506 330"
          marker={["590,820 | 575,805 550,801 510,807 205,803 187,812 177,832 185,851 | 210,854 | 212,846 | 510,848 540,842 568,845"]}
          pen={[
            "92,994 91,880 89,780 93,740 115,720 170,707 240,698 310,693 430,689 560,685 700,681 820,681 900,685 970,691 1040,693 1110,690 1190,682 1280,677 1350,680 1400,693 1430,718 1447,760 1454,820 1451,875 1440,920 1436,942 1439,951",
            "1331,721 1350,714 1375,725 1395,755 1408,795 1402,830 1385,855 1360,868 1330,869 1303,857 1284,832 1280,790 1290,750 1310,718 1332,703 1350,708 1362,725 1368,757",
          ]}
        />
      </section>
      <nav aria-label="Feed tabs" className="relative flex h-[127px] items-start justify-between pt-[17px] pr-[47px] pl-12">
        <div className="pointer-events-none absolute inset-0">
          <Ink
            box="21 960 1506 381"
            pen={[
              "263,964 248,963 240,952 225,947 190,956 145,970 110,985 80,1005 64,1040 57,1090 59,1160 68,1220 80,1260 100,1288 130,1302 170,1305 350,1303 500,1301 760,1299 900,1295 1020,1293 1180,1295 1270,1288 1340,1276 1400,1258 1445,1241 1467,1222 1472,1170 1474,1100 1468,1040 1455,995 1435,963 1405,943 1350,928 1270,916 1170,907 1080,904 980,907 900,916 810,932 720,950 620,967 520,978 420,984 340,983 250,976 130,976",
            ]}
          />
        </div>
        <NavButton label="Tab 1" />
        <NavButton label="Tab 2" />
        <NavButton label="Tab 3" />
        <NavButton label="Add">
          <Plus box="1190 1012 216 252" pen={["1302,1052 1288,1053 1282,1070 1285,1120 1291,1170 1293,1215 1299,1231", "1241,1143 1300,1142 1361,1142"]} />
        </NavButton>
      </nav>
    </Phone>
  );
}

export default function App() {
  return (
    <main className="min-h-screen bg-white px-[23px] pt-[3px] pb-[22px] font-['Inter',sans-serif]">
      <h1 className="flex h-[17px] w-fit items-center rounded-[4px] border border-[#dedede] bg-[#e6e6e6] px-1 text-[10px] leading-none font-medium text-black">
        Section 1
      </h1>
      <section aria-label="Section 1" className="mt-[3px] rounded-[5px] border border-[#e2e2e2] bg-white pt-[228px] pr-[210px] pb-[183px] pl-[228px]">
        <div className="grid grid-cols-3 gap-[122px]">
          <Dashboard />
          <Agenda />
          <Feed />
        </div>
      </section>
    </main>
  );
}
